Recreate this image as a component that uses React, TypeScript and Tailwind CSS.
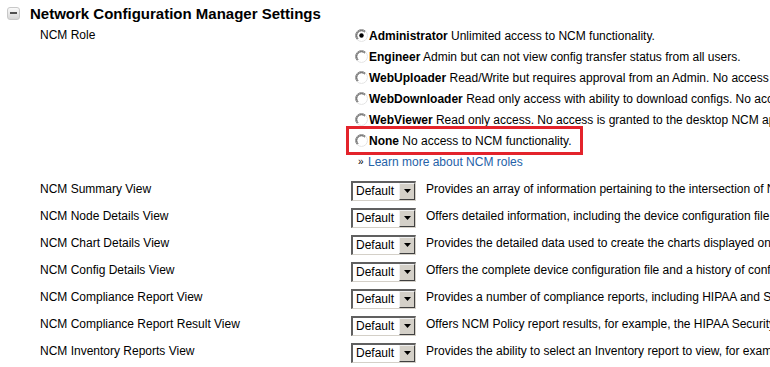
import React from 'react'

const roles = [
  { name: 'Administrator', desc: 'Unlimited access to NCM functionality.', checked: true },
  { name: 'Engineer', desc: 'Admin but can not view config transfer status from all users.' },
  { name: 'WebUploader', desc: 'Read/Write but requires approval from an Admin. No access is granted to the desktop NCM application.' },
  { name: 'WebDownloader', desc: 'Read only access with ability to download configs. No access is granted to the desktop NCM application.' },
  { name: 'WebViewer', desc: 'Read only access. No access is granted to the desktop NCM application.' },
]

const views = [
  { label: 'NCM Summary View', desc: 'Provides an array of information pertaining to the intersection of NCM and NPM data.' },
  { label: 'NCM Node Details View', desc: 'Offers detailed information, including the device configuration file and history.' },
  { label: 'NCM Chart Details View', desc: 'Provides the detailed data used to create the charts displayed on the summary page.' },
  { label: 'NCM Config Details View', desc: 'Offers the complete device configuration file and a history of config changes.' },
  { label: 'NCM Compliance Report View', desc: 'Provides a number of compliance reports, including HIPAA and SOX.' },
  { label: 'NCM Compliance Report Result View', desc: 'Offers NCM Policy report results, for example, the HIPAA Security Rule results.' },
  { label: 'NCM Inventory Reports View', desc: 'Provides the ability to select an Inventory report to view, for example, interfaces.' },
]

function Radio({ checked }: { checked?: boolean }) {
  return (
    <svg width="13" height="13" viewBox="0 0 13 13" className="shrink-0">
      <circle cx="6.5" cy="6.5" r="6" fill="#fff" />
      <path d="M2.3 10.7 A5.9 5.9 0 0 1 10.7 2.3" fill="none" stroke="#8a8a8a" strokeWidth="1" />
      <path d="M3.1 9.9 A4.8 4.8 0 0 1 9.9 3.1" fill="none" stroke="#3c3c3c" strokeWidth="1" />
      <path d="M10.7 2.3 A5.9 5.9 0 0 1 2.3 10.7" fill="none" stroke="#e4e4e4" strokeWidth="1" />
      {checked && <circle cx="6.5" cy="6.5" r="2.2" fill="#000" />}
    </svg>
  )
}

function Select() {
  return (
    <div className="flex h-[20px] w-[65px] shrink-0 border-t-2 border-l-2 border-t-[#606060] border-l-[#606060] border-b border-r border-b-[#d4d0c8] border-r-[#d4d0c8] bg-white">
      <div className="flex-1 pl-[3px] text-[12px] leading-[17px] text-black">Default</div>
      <div className="flex w-[16px] items-center justify-center border border-t-[#f0f0f0] border-l-[#f0f0f0] border-b-[#404040] border-r-[#404040] bg-[#d4d0c8]">
        <svg width="7" height="4" viewBox="0 0 7 4">
          <path d="M0 0 H7 L3.5 4 Z" fill="#000" />
        </svg>
      </div>
    </div>
  )
}

export default function App() {
  return (
    <div className="h-[367px] w-[770px] overflow-hidden bg-white text-black" style={{ fontFamily: '"Liberation Sans", Arial, sans-serif' }}>
      <div className="flex h-[25px] items-center gap-[10px] pl-[7px] pt-[1px]">
        <div className="flex h-[13px] w-[13px] items-center justify-center rounded-[3px] border border-[#c8c8c8] bg-gradient-to-b from-[#fafafa] to-[#d6d6d6]">
          <div className="h-[2px] w-[7px] bg-[#505050]" />
        </div>
        <div className="text-[15px] font-bold leading-none">Network Configuration Manager Settings</div>
      </div>

      <div className="flex">
        <div className="w-[355px] shrink-0 pl-[40px] text-[12px] leading-[21px]">NCM Role</div>
        <div className="flex flex-col">
          {roles.map((r) => (
            <div key={r.name} className="flex h-[21px] items-center gap-[1px] whitespace-nowrap text-[12px]">
              <Radio checked={r.checked} />
              <span><b>{r.name}</b> {r.desc}</span>
            </div>
          ))}
          <div className="relative flex h-[21px] items-center gap-[1px] whitespace-nowrap text-[12px]">
            <Radio />
            <span><b>None</b> No access to NCM functionality.</span>
            <div className="absolute left-[-9px] top-[-4px] h-[29px] w-[237px] border-[3px] border-[#e3232b]" />
          </div>
          <div className="flex h-[21px] items-center whitespace-nowrap text-[12px]">
            <span className="w-[13px] pl-[3px] text-[10px] leading-none">»</span>
            <a className="text-[#2562a8]">Learn more about NCM roles</a>
          </div>
        </div>
      </div>

      <div className="mt-[5px] flex flex-col">
        {views.map((v) => (
          <div key={v.label} className="flex h-[27px] items-center whitespace-nowrap text-[12px]">
            <div className="w-[351px] shrink-0 pb-[3px] pl-[40px]">{v.label}</div>
            <Select />
            <div className="pb-[3px] pl-[10px]">{v.desc}</div>
          </div>
        ))}
      </div>
    </div>
  )
}
